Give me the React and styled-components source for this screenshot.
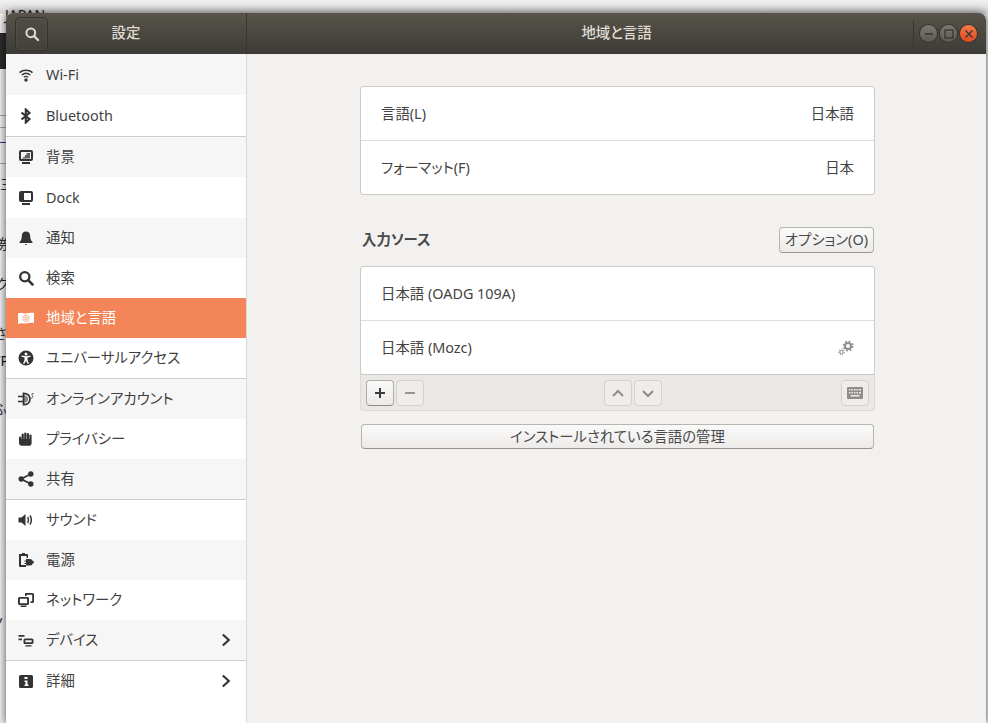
import React from "react";
import styled, { createGlobalStyle } from "styled-components";

const Global = createGlobalStyle`
  html, body { margin: 0; padding: 0; height: 100%; overflow: hidden; background: #f4f4f4; }
  body {
    font-family: "Noto Sans", "Noto Sans CJK JP", sans-serif;
    font-size: 14.4px;
    line-height: 20px;
    font-feature-settings: "palt";
    color: #3d3d3d;
  }
  #root { height: 100%; }
`;

const Desktop = styled.div`
  position: relative;
  height: 723px;
  width: 988px;
  box-sizing: border-box;
  padding: 13px 2px 0 6px;
  overflow: hidden;
  background: linear-gradient(#f0f0f0, #dcdcdc 13px, #f4f4f4 14px);
`;

const Scrap = styled.span`
  position: absolute;
  left: ${p => p.$x}px;
  top: ${p => p.$y}px;
  font-size: 14px;
  line-height: 16px;
  color: ${p => p.$c || "#222"};
  white-space: nowrap;
`;

const ScrapBar = styled.i`
  position: absolute;
  left: 0;
  top: ${p => p.$y}px;
  width: 6px;
  height: ${p => p.$h}px;
  background: ${p => p.$c};
`;

const Win = styled.div`
  position: relative;
  display: flex;
  flex-direction: column;
  height: 710px;
  border-radius: 7px 7px 0 0;
  overflow: hidden;
  background: #f2f1ef;
  box-shadow: 0 0 9px 1px rgba(0, 0, 0, 0.6);
`;

const Header = styled.header`
  display: flex;
  align-items: center;
  height: 41px;
  flex: none;
  background: linear-gradient(#58544b, #3c3b37);
  color: #dfdbd2;
  font-weight: 500;
`;

const HeaderLeft = styled.div`
  width: 241px;
  height: 100%;
  box-sizing: border-box;
  flex: none;
  display: flex;
  align-items: center;
  padding-left: 9px;
  border-right: 1px solid #38362f;
`;

const SearchToggle = styled.div`
  width: 33px;
  height: 34px;
  flex: none;
  box-sizing: border-box;
  border: 1px solid #33322d;
  border-radius: 5px;
  background: linear-gradient(#504d45, #43413a);
  box-shadow: inset 0 0 0 1px rgba(255,255,255,0.04);
  display: flex;
  align-items: center;
  justify-content: center;
  color: #dfdbd2;
`;

const SideTitle = styled.div`
  flex: 1;
  text-align: center;
  padding: 0 42px 2px 0;
`;

const MainTitle = styled.div`
  flex: 1;
  text-align: center;
  padding: 0 0 2px 73px;
`;

const WinControls = styled.div`
  width: 73px;
  height: 100%;
  flex: none;
  box-sizing: border-box;
  display: flex;
  align-items: center;
  gap: 3px;
  padding-left: 7px;
  position: relative;
  &::before {
    content: "";
    position: absolute;
    left: 0;
    top: 7px;
    bottom: 7px;
    width: 1px;
    background: #38362f;
  }
`;

const WinBtn = styled.div`
  width: 17px;
  height: 17px;
  border-radius: 50%;
  display: flex;
  align-items: center;
  justify-content: center;
  background: ${p => p.$close ? "linear-gradient(#f4784a, #e2491c)" : "linear-gradient(#7a7870, #5c5a52)"};
  box-shadow: 0 0 0 1px #35332e;
  color: ${p => p.$close ? "#3c3b37" : "#33322d"};
`;

const Body = styled.div`
  flex: 1;
  display: flex;
  min-height: 0;
`;

const Sidebar = styled.nav`
  width: 241px;
  flex: none;
  box-sizing: border-box;
  background: #fff;
  border-right: 1px solid #d9d8d5;
`;

const Row = styled.div`
  display: flex;
  align-items: center;
  height: ${p => p.$h}px;
  box-sizing: border-box;
  padding: 0 12px;
  gap: 12px;
  background: ${p => p.$sel ? "#f48558" : p.$shade ? "#f6f6f6" : "#fff"};
  color: ${p => p.$sel ? "#fff" : "#3f3f3f"};
  border-top: ${p => p.$div ? "1px solid #cdcdcd" : "none"};
`;

const IconSlot = styled.span`
  width: 16px;
  height: 16px;
  flex: none;
  display: flex;
  color: ${p => p.$tint || (p.$sel ? "#fff" : "#333")};
`;

const RowLabel = styled.span`
  flex: 1;
`;

const Main = styled.main`
  flex: 1;
  padding: 32px 0 0 113px;
  box-sizing: border-box;
`;

const Column = styled.div`
  width: 515px;
`;

const Panel = styled.section`
  background: #fff;
  border: 1px solid #cdc9c4;
  border-radius: 3px;
  overflow: hidden;
`;

const PanelRow = styled.div`
  height: ${p => p.$top ? 53 : 54}px;
  box-sizing: border-box;
  display: flex;
  align-items: center;
  justify-content: space-between;
  padding: 0 20px;
  border-top: ${p => p.$top ? "none" : "1px solid #dedcd9"};
  color: #444;
`;

const SectionHead = styled.div`
  display: flex;
  align-items: center;
  justify-content: space-between;
  margin: 32px 0 13px;
  padding: 0 1px 0 2px;
  height: 26px;
`;

const SectionTitle = styled.h2`
  margin: 0;
  font-size: 14.4px;
  font-weight: 700;
  color: #4a4a4a;
`;

const Btn = styled.button`
  font: inherit;
  font-feature-settings: inherit;
  color: #4a4a4a;
  box-sizing: border-box;
  height: 26px;
  padding: 0 5px;
  border: 1px solid #b8b4ae;
  border-bottom-color: #98948e;
  border-radius: 4px;
  background: linear-gradient(#fbfafa, #ecebe9);
  display: flex;
  align-items: center;
  justify-content: center;
`;

const Toolbar = styled.div`
  height: 37px;
  box-sizing: border-box;
  display: flex;
  align-items: center;
  padding: 0 5px;
  background: #e9e8e6;
  border: 1px solid #dcdad7;
  border-top: 1px solid #cdc9c4;
  border-radius: 0 0 3px 3px;
  margin-top: -1px;
`;

const ToolGroup = styled.div`
  display: flex;
  gap: 2px;
  margin-left: ${p => p.$ml || 0}px;
`;

const ToolBtn = styled.div`
  width: 28px;
  height: 26px;
  box-sizing: border-box;
  border-radius: 4px;
  display: flex;
  align-items: center;
  justify-content: center;
  border: 1px solid ${p => p.$on ? "#b0aca6" : "#d3d1cd"};
  border-bottom-color: ${p => p.$on ? "#8f8b85" : "#d3d1cd"};
  background: ${p => p.$on ? "linear-gradient(#fbfafa, #ecebe9)" : "#eeedeb"};
  color: ${p => p.$on ? "#3c3c3c" : "#8f8d88"};
`;

const Manage = styled(Btn)`
  width: 513px;
  height: 25px;
  margin: 13px 0 0 1px;
`;

const S = ({ children, size = 16, vb = "0 0 16 16" }) => (
  <svg width={size} height={size} viewBox={vb} fill="currentColor" aria-hidden="true">{children}</svg>
);

const icons = {
  search: <S><circle cx="6.800" cy="6.800" r="4.400" fill="none" stroke="currentColor" strokeWidth="2" /><path d="M10 10l4 4" stroke="currentColor" strokeWidth="2.400" strokeLinecap="round" /></S>,
  wifi: <S><g fill="none" stroke="currentColor"><path d="M1.500 5.600C5 2.600 11 2.600 14.500 5.600" strokeWidth="1.500" /><path d="M3.700 8C6.200 6 9.800 6 12.300 8" strokeWidth="1.400" /><path d="M5.800 10.200c1.300-1 3.100-1 4.400 0" strokeWidth="1.400" /></g><circle cx="8" cy="13" r="1.700" /></S>,
  bluetooth: <S><path d="M3.500 4.500L11.500 11 7.800 14.500V1.500L11.500 5 3.500 11.500" fill="none" stroke="currentColor" strokeWidth="2.100" /></S>,
  background: <S><path fillRule="evenodd" d="M3 1h10a2 2 0 0 1 2 2v7a2 2 0 0 1-2 2H3a2 2 0 0 1-2-2V3a2 2 0 0 1 2-2zm0 2v7h10V3H3z" /><path d="M4 9l3-1.400V6h1.500V4H12v5.500H4z" opacity=".75" /><path d="M4 13h8v2H4z" /></S>,
  dock: <S><path fillRule="evenodd" d="M3 1h10a2 2 0 0 1 2 2v7a2 2 0 0 1-2 2H3a2 2 0 0 1-2-2V3a2 2 0 0 1 2-2zm3 2v7h7V3H6z" /><path d="M4 13h8v2H4z" /></S>,
  bell: <S><path d="M8 1.500c2.800 0 4.200 2 4.200 4.600 0 3 .8 4.600 2.300 6V13h-13v-.9c1.500-1.400 2.300-3 2.300-6C3.800 3.500 5.200 1.500 8 1.500z" /><path d="M7 14.200h2V15H7z" /></S>,
  find: <S><circle cx="6.800" cy="6.800" r="4.600" fill="none" stroke="currentColor" strokeWidth="2.300" /><path d="M10.200 10.200l4.300 4.300" stroke="currentColor" strokeWidth="2.500" strokeLinecap="round" /></S>,
  flag: <S><path d="M0 3.500c3-1.200 5 0 8 0s5-1.200 8-.4v10c-3-.8-5 .4-8 .4s-5-1-8 .4V3.500z" /><g fill="none" stroke="#f7a98a"><circle cx="8" cy="8.300" r="1.400" strokeWidth="1" /><circle cx="8" cy="8.300" r="3.200" strokeWidth=".9" /></g></S>,
  access: <S><path fillRule="evenodd" d="M8 .5a7.500 7.500 0 1 1 0 15 7.500 7.500 0 0 1 0-15zM8 2.500a1.500 1.500 0 1 0 0 3 1.500 1.500 0 0 0 0-3zM3.500 5.500v1.300l3 .8v2.400L5 13.500l1.200.5L8 10.800 9.800 14l1.200-.5-1.500-3.500V7.600l3-.8V5.500L8 6.300z" /></S>,
  online: <S><path d="M5.500 2.300c4 0 6.500 2.500 6.500 5.700s-2.500 5.700-6.500 5.700V2.300z" fill="none" stroke="currentColor" strokeWidth="1.700" /><path d="M6 4v8c2.500-.3 4.200-2 4.200-4S8.500 4.300 6 4z" opacity=".55" /><path d="M0 4.700h5.500v1.500H0zM0 9.800h5.500v1.500H0z" /><path d="M15.700 2.600c-1.300-.6-2 .2-1.700 1.100.3 1 .9 1.400.6 2.500-.3 1-1.100 1-1.800.6" fill="none" stroke="currentColor" strokeWidth=".8" /></S>,
  hand: <S><path d="M1 6.500a1.100 1.100 0 0 1 2.200 0V8h.4V3.500a1.100 1.100 0 0 1 2.200 0V8h.4V2.500a1.100 1.100 0 0 1 2.200 0V8h.4V3a1.100 1.100 0 0 1 2.200 0v5h.4V4.500a1.100 1.100 0 0 1 2.200 0v7.700c0 1.500-1 2.600-2.500 2.600H4c-1.800 0-3-1-3-2.800V6.500z" /></S>,
  share: <S><circle cx="3.200" cy="8" r="2.700" /><circle cx="12.800" cy="3" r="2.700" /><circle cx="12.800" cy="13" r="2.700" /><path d="M3.200 8l9.600-5M3.200 8l9.600 5" stroke="currentColor" strokeWidth="1.800" fill="none" /></S>,
  sound: <S><path d="M.5 5.500h3L7.500 2v12l-4-3.500h-3z" /><path d="M9.700 5c1 1.800 1 4.200 0 6" fill="none" stroke="currentColor" strokeWidth="1.500" /><path d="M12 3.500c1.700 2.800 1.700 6.200 0 9" fill="none" stroke="currentColor" strokeWidth="1.500" /></S>,
  power: <S><path d="M1 2h3V1h3v1h2a1 1 0 0 1 1 1v3H8.500V4H3v9h5v2H2a1 1 0 0 1-1-1z" /><path d="M8 7h4a3 3 0 0 1 3 2.500h1V11h-1a3 3 0 0 1-3 2.500H8V12H6.500v-1H8V9.500H6.500v-1H8z" /></S>,
  network: <S><path fillRule="evenodd" d="M1.500 5h8A1.500 1.500 0 0 1 11 6.500v5A1.500 1.500 0 0 1 9.500 13h-8A1.500 1.500 0 0 1 0 11.500v-5A1.500 1.500 0 0 1 1.500 5zm.4 1.800v4.400h7.200V6.800H1.900z" /><path d="M2.500 13.500h6V15h-6z" /><path d="M7 1h7.500A1.500 1.500 0 0 1 16 2.500v7a1.500 1.500 0 0 1-1.500 1.500H12.500V9.300h1.700v-6.500H8.700V4H7z" /></S>,
  devices: <S><path d="M.5 3h6v1.800h-6zM.5 6.500h3.500v1.800H.5z" /><path fillRule="evenodd" d="M7 6.500h7a1.500 1.500 0 0 1 1.500 1.500v2.500A1.500 1.500 0 0 1 14 12H7a1.500 1.500 0 0 1-1.500-1.500V8A1.500 1.500 0 0 1 7 6.500zm.3 1.700v2.100h6.400V8.200H7.300z" /><path d="M7.500 13.200h6v1.300h-6z" /></S>,
  info: <S><path fillRule="evenodd" d="M2.500 2h11A1.500 1.500 0 0 1 15 3.500v10a1.500 1.500 0 0 1-1.500 1.500h-11A1.500 1.500 0 0 1 1 13.500v-10A1.500 1.500 0 0 1 2.500 2zM6.500 4v2h3V4h-3zm0 3.500V9H7.500v2.500h-1V13h4v-1.500h-1v-4h-3z" /></S>,
  chevron: <S><path d="M4.800 2.500l6 5.500-6 5.500" fill="none" stroke="currentColor" strokeWidth="2.100" /></S>,
  close: <S size={10} vb="0 0 10 10"><path d="M1.500 1.500l7 7M8.500 1.500l-7 7" stroke="currentColor" strokeWidth="1.500" /></S>,
  min: <S size={10} vb="0 0 10 10"><path d="M1 5h8" stroke="currentColor" strokeWidth="1.300" /></S>,
  max: <S size={10} vb="0 0 10 10"><rect x="1" y="1" width="8" height="8" fill="none" stroke="currentColor" strokeWidth="1.200" /></S>,
  plus: <S size={12} vb="0 0 12 12"><path d="M6 1v10M1 6h10" stroke="currentColor" strokeWidth="2" /></S>,
  minus: <S size={12} vb="0 0 12 12"><path d="M1 6h10" stroke="currentColor" strokeWidth="1.800" /></S>,
  up: <S size={14} vb="0 0 14 14"><path d="M2 10l5-5 5 5" fill="none" stroke="currentColor" strokeWidth="2" /></S>,
  down: <S size={14} vb="0 0 14 14"><path d="M2 5l5 5 5-5" fill="none" stroke="currentColor" strokeWidth="2" /></S>,
  keyboard: <S><path fillRule="evenodd" d="M1 2h14a1 1 0 0 1 1 1v10a1 1 0 0 1-1 1H1a1 1 0 0 1-1-1V3a1 1 0 0 1 1-1zm1 2v1.500h1.500V4H2zm2.500 0v1.500H6V4H4.500zM7 4v1.500h1.500V4H7zm2.500 0v1.500H11V4H9.500zM12 4v1.500h2V4h-2zM2 7v1.500h1.500V7H2zm2.500 0v1.500H6V7H4.500zM7 7v1.500h1.500V7H7zm2.500 0v1.500H11V7H9.500zM12 7v1.500h2V7h-2zM3.500 10v1.500h9V10h-9z" /></S>,
  gears: (
    <S>
      <g fill="none" stroke="currentColor">
        <circle cx="10" cy="6" r="3" strokeWidth="2" />
        <circle cx="10" cy="6" r="4.700" strokeWidth="1.500" strokeDasharray="1.800 1.900" />
        <circle cx="3.500" cy="12" r="1.700" strokeWidth="1" />
        <circle cx="3.500" cy="12" r="2.800" strokeWidth="1" strokeDasharray="1.200 1.300" />
      </g>
    </S>
  ),
};

const items = [
  { k: "wifi", t: "Wi-Fi", h: 41, shade: 1 },
  { k: "bluetooth", t: "Bluetooth", h: 41 },
  { k: "background", t: "背景", h: 41, shade: 1, div: 1 },
  { k: "dock", t: "Dock", h: 41 },
  { k: "bell", t: "通知", h: 40, shade: 1 },
  { k: "find", t: "検索", h: 40 },
  { k: "flag", t: "地域と言語", h: 40, sel: 1 },
  { k: "access", t: "ユニバーサルアクセス", h: 40 },
  { k: "online", t: "オンラインアカウント", h: 41, shade: 1, div: 1 },
  { k: "hand", t: "プライバシー", h: 40 },
  { k: "share", t: "共有", h: 40, shade: 1 },
  { k: "sound", t: "サウンド", h: 41, div: 1 },
  { k: "power", t: "電源", h: 40, shade: 1 },
  { k: "network", t: "ネットワーク", h: 40 },
  { k: "devices", t: "デバイス", h: 40, shade: 1, more: 1 },
  { k: "info", t: "詳細", h: 41, div: 1, more: 1 },
];

const scraps = [
  ["JAPAN", 5, 7, "#222"],
  ["三", 0, 176, "#333"],
  ["券", -4, 236, "#333"],
  ["ク", -4, 276, "#222"],
  ["さ", -6, 326, "#333"],
  ["VP", -8, 353, "#123"],
  ["ふ", -6, 401, "#335"],
  ["ノ", -8, 615, "#222"],
];

export default function App() {
  return (
    <>
      <Global />
      <Desktop>
        {scraps.map(([t, x, y, c]) => <Scrap key={t} $x={x} $y={y} $c={c}>{t}</Scrap>)}
        <ScrapBar $y={33} $h={36} $c="#2c2c2c" />
        <ScrapBar $y={115} $h={1} $c="#aaa" />
        <ScrapBar $y={127} $h={1} $c="#aaa" />
        <ScrapBar $y={142} $h={1} $c="#247" />
        <ScrapBar $y={163} $h={1} $c="#aaa" />
        <Win>
          <Header>
            <HeaderLeft>
              <SearchToggle>{icons.search}</SearchToggle>
              <SideTitle>設定</SideTitle>
            </HeaderLeft>
            <MainTitle>地域と言語</MainTitle>
            <WinControls>
              <WinBtn>{icons.min}</WinBtn>
              <WinBtn>{icons.max}</WinBtn>
              <WinBtn $close>{icons.close}</WinBtn>
            </WinControls>
          </Header>
          <Body>
            <Sidebar>
              {items.map(i => (
                <Row key={i.k} $h={i.h} $shade={i.shade} $sel={i.sel} $div={i.div}>
                  <IconSlot $sel={i.sel}>{icons[i.k]}</IconSlot>
                  <RowLabel>{i.t}</RowLabel>
                  {i.more && <IconSlot>{icons.chevron}</IconSlot>}
                </Row>
              ))}
            </Sidebar>
            <Main>
              <Column>
                <Panel>
                  <PanelRow $top><span>言語(L)</span><span>日本語</span></PanelRow>
                  <PanelRow><span>フォーマット(F)</span><span>日本</span></PanelRow>
                </Panel>
                <SectionHead>
                  <SectionTitle>入力ソース</SectionTitle>
                  <Btn>オプション(O)</Btn>
                </SectionHead>
                <Panel>
                  <PanelRow $top><span>日本語 (OADG 109A)</span></PanelRow>
                  <PanelRow>
                    <span>日本語 (Mozc)</span>
                    <IconSlot $tint="#8f8d88">{icons.gears}</IconSlot>
                  </PanelRow>
                </Panel>
                <Toolbar>
                  <ToolGroup>
                    <ToolBtn $on>{icons.plus}</ToolBtn>
                    <ToolBtn>{icons.minus}</ToolBtn>
                  </ToolGroup>
                  <ToolGroup $ml={180}>
                    <ToolBtn>{icons.up}</ToolBtn>
                    <ToolBtn>{icons.down}</ToolBtn>
                  </ToolGroup>
                  <ToolGroup $ml={179}>
                    <ToolBtn>{icons.keyboard}</ToolBtn>
                  </ToolGroup>
                </Toolbar>
                <Manage>インストールされている言語の管理</Manage>
              </Column>
            </Main>
          </Body>
        </Win>
      </Desktop>
    </>
  );
}
